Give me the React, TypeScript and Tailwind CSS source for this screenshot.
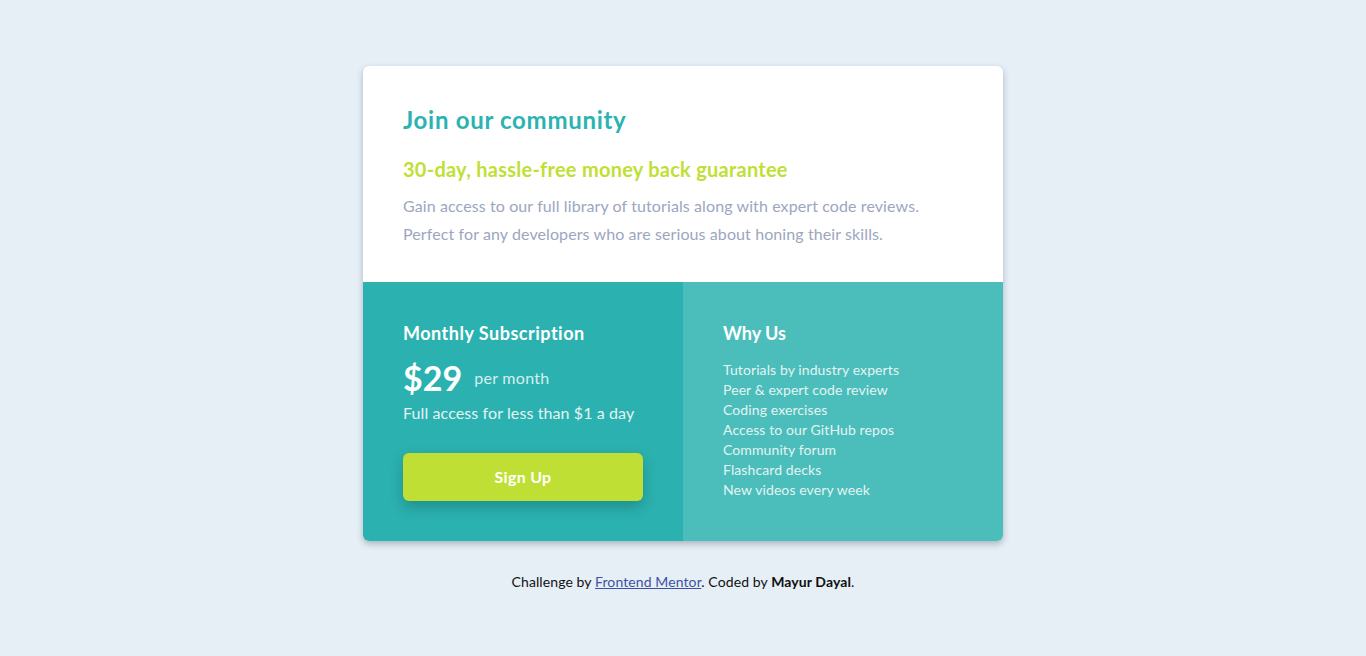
import React from "react";

export default function App() {
  const items = [
    "Tutorials by industry experts",
    "Peer & expert code review",
    "Coding exercises",
    "Access to our GitHub repos",
    "Community forum",
    "Flashcard decks",
    "New videos every week",
  ];
  return (
    <div
      className="min-h-screen w-full bg-[#e6eef6] flex flex-col items-center pt-[66px]"
      style={{ fontFamily: "Lato, 'Noto Sans', sans-serif" }}
    >
      <div className="w-[640px] rounded-md overflow-hidden bg-white shadow-[0_3px_6px_rgba(60,80,100,0.35)]">
        <div className="h-[216px] px-10 pt-[40px]">
          <h1 className="text-[24px] leading-[28px] font-bold tracking-[0.7px] text-[#2bb3b1]">Join our community</h1>
          <h2 className="mt-[23px] text-[20px] leading-[24px] font-bold tracking-[0.25px] text-[#c0df34]">
            30-day, hassle-free money back guarantee
          </h2>
          <p className="mt-[11px] text-[16px] leading-[28px] tracking-[0.1px] text-[#9ca6c0]">
            Gain access to our full library of tutorials along with expert code reviews.
            <br />
            Perfect for any developers who are serious about honing their skills.
          </p>
        </div>
        <div className="flex h-[259px]">
          <div className="w-[320px] bg-[#2bb2b0] px-10 pt-[40px]">
            <h3 className="text-[18px] leading-[22px] font-bold tracking-[0.5px] text-white">Monthly Subscription</h3>
            <div className="mt-[18px] flex items-center gap-[12px]">
              <span className="text-[34px] leading-[32px] font-bold text-white">$29</span>
              <span className="text-[16px] tracking-[0.3px] text-[#d6efee]">per month</span>
            </div>
            <p className="mt-[8px] text-[16px] leading-[22px] tracking-[0.1px] text-[#e3f4f3]">Full access for less than $1 a day</p>
            <button className="mt-[29px] w-[240px] h-[48px] rounded-md bg-[#c0df34] text-white font-bold text-[16px] tracking-[0.3px] shadow-[0_6px_14px_rgba(0,60,60,0.3)]">
              Sign Up
            </button>
          </div>
          <div className="w-[320px] bg-[#4bbdbb] px-10 pt-[40px]">
            <h3 className="text-[18px] leading-[22px] font-bold text-white">Why Us</h3>
            <ul className="mt-[16px] text-[14px] leading-[20px] tracking-[0.1px] text-[#e3f4f3]">
              {items.map((i) => (
                <li key={i}>{i}</li>
              ))}
            </ul>
          </div>
        </div>
      </div>
      <p className="mt-[30px] text-[14px] tracking-[0.1px] text-[#111]">
        Challenge by{" "}
        <a className="underline text-[#3e52a3]" href="#">
          Frontend Mentor
        </a>
        . Coded by <b>Mayur Dayal</b>.
      </p>
    </div>
  );
}
